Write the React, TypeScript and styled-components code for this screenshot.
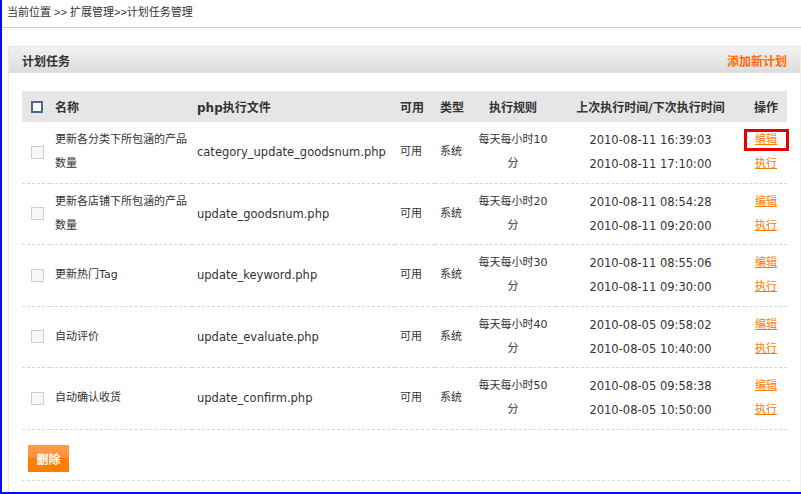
import React from 'react';
import styled, { createGlobalStyle } from 'styled-components';

const GlobalStyle = createGlobalStyle`
  html, body { margin: 0; padding: 0; background: #fff; }
  body {
    font-family: "DejaVu Sans", "Noto Sans CJK SC", sans-serif;
    font-size: 11px;
    color: #333;
  }
`;

const Frame = styled.div`
  width: 801px;
  height: 494px;
  box-sizing: border-box;
  border-left: 2px solid #0b0bf0;
  border-bottom: 2px solid #0b0bf0;
  overflow: hidden;
  background: #fff;
`;

const Breadcrumb = styled.div`
  height: 27px;
  line-height: 24px;
  padding-left: 5px;
  border-bottom: 1px solid #cfcfcf;
  color: #333;
  font-size: 11px;
  font-family: "Liberation Sans", "Noto Sans CJK SC", sans-serif;
`;

const Panel = styled.div`
  margin: 18px 0 0 6px;
  border-left: 1px solid #e6e6e6;
  border-right: 1px solid #eef3ea;
  height: 446px;
`;

const PanelHeader = styled.div`
  height: 27px;
  display: flex;
  align-items: center;
  justify-content: space-between;
  padding: 0 13px;
  background: linear-gradient(#f1f1f1, #dcdcdc);
  border-top: 1px solid #e4e4e4;
  box-sizing: border-box;
`;

const PanelTitle = styled.span`
  font-weight: bold;
  font-size: 12px;
  color: #333;
`;

const AddLink = styled.a`
  font-weight: bold;
  font-size: 12px;
  color: #ff6a00;
  text-decoration: none;
  cursor: pointer;
`;

const Body = styled.div`
  padding: 18px 0 0 13px;
`;

const Table = styled.table`
  width: 765px;
  border-collapse: collapse;
  table-layout: fixed;
`;

const Th = styled.th<{ $align?: string; $w: number; $pl?: number }>`
  width: ${p => p.$w}px;
  height: 31px;
  background: #e6e6e6;
  font-size: 12px;
  font-weight: bold;
  color: #333;
  text-align: ${p => p.$align || 'left'};
  padding: 0 0 0 ${p => (p.$pl ?? 5)}px;
  white-space: nowrap;
  box-sizing: border-box;
`;

const Td = styled.td<{ $align?: string; $latin?: boolean; $pl?: number; $pr?: number }>`
  padding: 6px ${p => (p.$pr ?? 0)}px 6.5px ${p => (p.$pl ?? 5)}px;
  line-height: 24px;
  border-bottom: 1px dashed #d6d6d6;
  vertical-align: middle;
  text-align: ${p => p.$align || 'left'};
  font-size: ${p => (p.$latin ? '11.5px' : '11px')};
  color: #333;
  box-sizing: border-box;
`;

const Check = styled.span<{ $head?: boolean }>`
  display: inline-block;
  width: ${p => (p.$head ? 12 : 13)}px;
  height: ${p => (p.$head ? 12 : 13)}px;
  box-sizing: border-box;
  vertical-align: middle;
  border: ${p => (p.$head ? '2px solid #4b6a93' : '1px solid #cfcfcf')};
  background: ${p => (p.$head ? '#fff' : '#f7f7f7')};
`;

const OpLink = styled.a<{ $hl?: boolean }>`
  position: relative;
  color: #ff7a00;
  text-decoration: underline;
  cursor: pointer;
  font-size: 11px;
  ${p =>
    p.$hl
      ? `&::after {
    content: '';
    position: absolute;
    left: -11px;
    right: -12px;
    top: -4px;
    bottom: -5px;
    border: 3px solid #e60000;
  }`
      : ''}
`;

const DeleteButton = styled.button`
  margin: 15px 0 0 6px;
  width: 41px;
  height: 27px;
  border: none;
  padding: 0;
  color: #fff;
  font-weight: bold;
  font-size: 12px;
  font-family: inherit;
  background: linear-gradient(#ff9c45 0%, #ff9040 45%, #ff7d00 50%, #ff7d00 100%);
  cursor: pointer;
  display: block;
`;

const FooterLine = styled.div`
  width: 768px;
  margin-top: 8px;
  border-bottom: 1px dashed #dcdcdc;
`;

type Task = {
  name: string;
  file: string;
  rule: string;
  last: string;
  next: string;
};

const tasks: Task[] = [
  { name: '更新各分类下所包涵的产品数量', file: 'category_update_goodsnum.php', rule: '每天每小时10分', last: '2010-08-11 16:39:03', next: '2010-08-11 17:10:00' },
  { name: '更新各店铺下所包涵的产品数量', file: 'update_goodsnum.php', rule: '每天每小时20分', last: '2010-08-11 08:54:28', next: '2010-08-11 09:20:00' },
  { name: '更新热门Tag', file: 'update_keyword.php', rule: '每天每小时30分', last: '2010-08-11 08:55:06', next: '2010-08-11 09:30:00' },
  { name: '自动评价', file: 'update_evaluate.php', rule: '每天每小时40分', last: '2010-08-05 09:58:02', next: '2010-08-05 10:40:00' },
  { name: '自动确认收货', file: 'update_confirm.php', rule: '每天每小时50分', last: '2010-08-05 09:58:38', next: '2010-08-05 10:50:00' },
];

export default function App() {
  return (
    <>
      <GlobalStyle />
      <Frame>
        <Breadcrumb>当前位置&nbsp;&gt;&gt; 扩展管理&gt;&gt;计划任务管理</Breadcrumb>
        <Panel>
          <PanelHeader>
            <PanelTitle>计划任务</PanelTitle>
            <AddLink>添加新计划</AddLink>
          </PanelHeader>
          <Body>
            <Table>
              <thead>
                <tr>
                  <Th $w={28} $pl={9}><Check $head /></Th>
                  <Th $w={142}>名称</Th>
                  <Th $w={203}>php执行文件</Th>
                  <Th $w={40}>可用</Th>
                  <Th $w={35}>类型</Th>
                  <Th $w={86} $align="center" $pl={0}>执行规则</Th>
                  <Th $w={189} $align="center" $pl={0}>上次执行时间/下次执行时间</Th>
                  <Th $w={42} $align="center" $pl={0}>操作</Th>
                </tr>
              </thead>
              <tbody>
                {tasks.map((t, i) => (
                  <tr key={i}>
                    <Td $pl={9}><Check /></Td>
                    <Td $pr={2}>{t.name}</Td>
                    <Td $latin>{t.file}</Td>
                    <Td>可用</Td>
                    <Td>系统</Td>
                    <Td $align="center" $pl={5} $pr={5}>{t.rule}</Td>
                    <Td $align="center" $pl={0} $latin>
                      {t.last}
                      <br />
                      {t.next}
                    </Td>
                    <Td $align="center" $pl={0}>
                      <OpLink $hl={i === 0}>编辑</OpLink>
                      <br />
                      <OpLink>执行</OpLink>
                    </Td>
                  </tr>
                ))}
              </tbody>
            </Table>
            <DeleteButton>删除</DeleteButton>
            <FooterLine />
          </Body>
        </Panel>
      </Frame>
    </>
  );
}
